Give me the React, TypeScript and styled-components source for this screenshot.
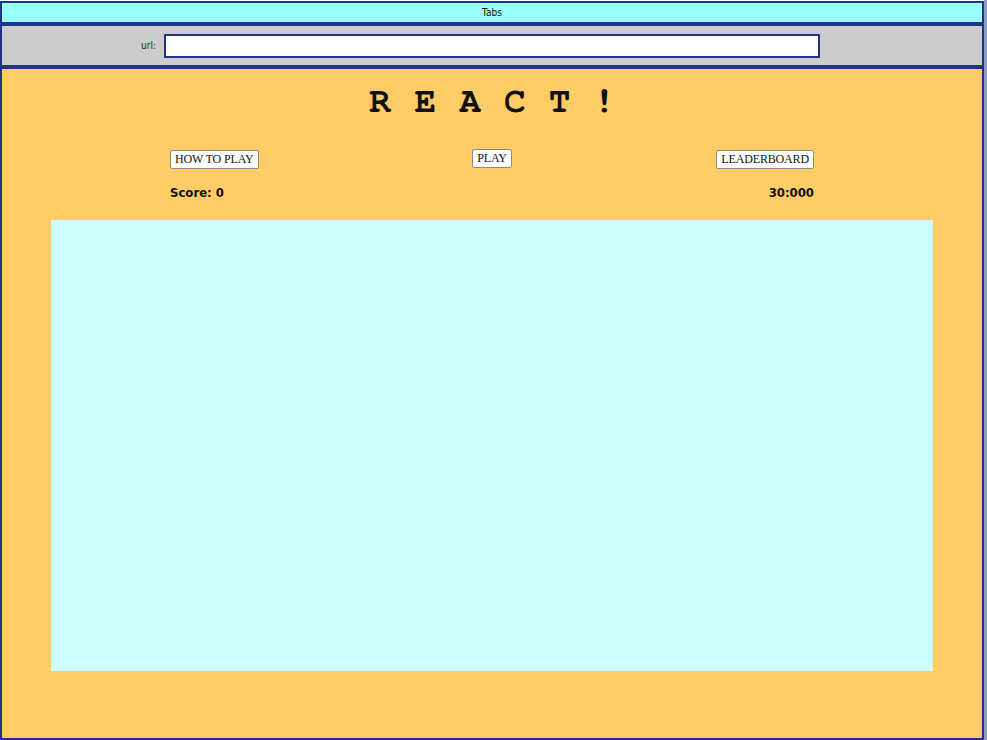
import React from "react";
import styled, { createGlobalStyle } from "styled-components";

const Global = createGlobalStyle`
  html, body { margin: 0; padding: 0; background: #8e9cc0; }
  body { width: 987px; height: 740px; overflow: hidden; }
`;

const Frame = styled.div`
  width: 984px;
  height: 740px;
  display: flex;
  flex-direction: column;
  background: #fff;
`;

const TabsBar = styled.div`
  height: 19px;
  border: 2px solid #1e3488;
  background: #99ffff;
  display: flex;
  align-items: center;
  justify-content: center;
  font-family: "DejaVu Sans Condensed", "DejaVu Sans", sans-serif;
  font-size: 10px;
  color: #111;
  margin-top: 1px;
`;

const UrlBar = styled.div`
  height: 39px;
  border: 2px solid #1e3488;
  background: #cccccc;
  display: flex;
  align-items: center;
  padding-left: 139px;
  gap: 8px;
`;

const UrlLabel = styled.label`
  font-family: "DejaVu Sans Condensed", "DejaVu Sans", sans-serif;
  font-size: 10px;
  color: #222;
`;

const UrlInput = styled.input`
  width: 652px;
  height: 20px;
  box-sizing: content-box;
  padding: 0;
  border: 2px solid #1e3488;
  background: #fff;
  outline: none;
`;

const Main = styled.main`
  flex: 1;
  border: 2px solid #1e3488;
  background: #ffcc66;
  display: flex;
  flex-direction: column;
  align-items: center;
`;

const Title = styled.h1`
  margin: 14px 0 0 0;
  padding-left: 24px;
  font-family: "Nimbus Mono PS", "Nimbus Mono L", "FreeMono", "Courier New", Courier, "Liberation Mono", monospace;
  font-weight: bold;
  font-size: 36px;
  letter-spacing: 23.2px;
  line-height: 36px;
  color: #111;
`;

const Controls = styled.div`
  width: 644px;
  margin-top: 31px;
  display: grid;
  grid-template-columns: 1fr auto 1fr;
  align-items: start;
`;

const Button = styled.button<{ $align: "start" | "center" | "end"; $lift?: number }>`
  justify-self: ${(p) => p.$align};
  font-family: "Liberation Serif", "Times New Roman", serif;
  font-size: 12px;
  letter-spacing: -0.15px;
  color: #111;
  background: #fff;
  border: 1px solid #8a8a8a;
  border-radius: 2px;
  padding: 1px 4px;
  height: 19px;
  margin-top: ${(p) => -(p.$lift ?? 0)}px;
`;

const StatsRow = styled.div`
  width: 644px;
  margin-top: 16px;
  display: flex;
  justify-content: space-between;
  font-family: "DejaVu Sans Condensed", "DejaVu Sans", sans-serif;
  font-weight: bold;
  font-size: 13px;
  color: #111;
`;

const GameArea = styled.div`
  width: 882px;
  height: 451px;
  margin-top: 20px;
  background: #ccffff;
`;

export default function App() {
  return (
    <>
      <Global />
      <Frame>
        <TabsBar>Tabs</TabsBar>
        <UrlBar>
          <UrlLabel>url:</UrlLabel>
          <UrlInput type="text" />
        </UrlBar>
        <Main>
          <Title>REACT!</Title>
          <Controls>
            <Button $align="start">HOW TO PLAY</Button>
            <Button $align="center" $lift={1}>PLAY</Button>
            <Button $align="end">LEADERBOARD</Button>
          </Controls>
          <StatsRow>
            <span>Score: 0</span>
            <span>30:000</span>
          </StatsRow>
          <GameArea />
        </Main>
      </Frame>
    </>
  );
}
